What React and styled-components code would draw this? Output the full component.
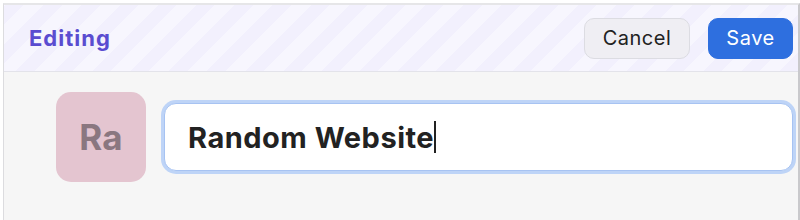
import React from "react";
import styled, { createGlobalStyle } from "styled-components";

const Global = createGlobalStyle`
  html, body { margin: 0; padding: 0; background: #ffffff; }
  body { font-family: Inter, "Noto Sans", Arial, sans-serif; }
`;

const Frame = styled.div`
  margin: 3px 0 0 3px;
  height: 217px;
  box-sizing: border-box;
  border-top: 2px solid #e6e6e8;
  border-left: 1px solid #dcdcdf;
  border-right: 2px solid #c9c9cc;
  background: #f6f6f6;
  display: flex;
  flex-direction: column;
`;

const Header = styled.div`
  height: 66px;
  border-bottom: 1px solid #e3e3ea;
  display: flex;
  align-items: center;
  justify-content: space-between;
  padding: 0 5px 0 25px;
  background-color: #f7f6fe;
  background-image: repeating-linear-gradient(
    -45deg,
    #f2f0fd 0px,
    #f2f0fd 13px,
    #f7f6fe 13px,
    #f7f6fe 27px
  );
`;

const Title = styled.div`
  font-size: 22px;
  font-weight: 700;
  color: #5a4cd0;
  letter-spacing: 1px;
`;

const Actions = styled.div`
  display: flex;
  gap: 18px;
  align-items: center;
`;

const Button = styled.button`
  height: 41px;
  box-sizing: border-box;
  border-radius: 10px;
  font-family: Inter, "Noto Sans", Arial, sans-serif;
  font-size: 20px;
  font-weight: 400;
  letter-spacing: 0.5px;
  padding: 0;
  width: ${(p) => p.$w}px;
  background: ${(p) => (p.$primary ? "#2e6fdf" : "#efeef3")};
  color: ${(p) => (p.$primary ? "#ffffff" : "#222222")};
  border: 1px solid ${(p) => (p.$primary ? "#2e6fdf" : "#dcdce2")};
`;

const Body = styled.div`
  display: flex;
  align-items: center;
  gap: 18px;
  padding: 20px 5px 0 52px;
`;

const Avatar = styled.div`
  width: 90px;
  height: 90px;
  border-radius: 15px;
  background: #e4c5d0;
  color: #8a7780;
  font-size: 35px;
  font-weight: 700;
  letter-spacing: 0.3px;
  display: flex;
  align-items: center;
  justify-content: center;
  flex-shrink: 0;
`;

const Field = styled.div`
  flex: 1;
  height: 68px;
  box-sizing: border-box;
  background: #ffffff;
  border: 1px solid #a7c3f2;
  box-shadow: 0 0 0 3px #bed4f7;
  border-radius: 12px;
  display: flex;
  align-items: center;
  padding-left: 23px;
  font-size: 29px;
  font-weight: 700;
  color: #222222;
  letter-spacing: 0.5px;
`;

const Caret = styled.span`
  display: inline-block;
  width: 1.5px;
  height: 32px;
  background: #222;
  margin-left: 0px;
`;

export default function App() {
  return (
    <>
      <Global />
      <Frame>
        <Header>
          <Title>Editing</Title>
          <Actions>
            <Button $w={106}>Cancel</Button>
            <Button $w={85} $primary>Save</Button>
          </Actions>
        </Header>
        <Body>
          <Avatar>Ra</Avatar>
          <Field>
            Random Website
            <Caret />
          </Field>
        </Body>
      </Frame>
    </>
  );
}
